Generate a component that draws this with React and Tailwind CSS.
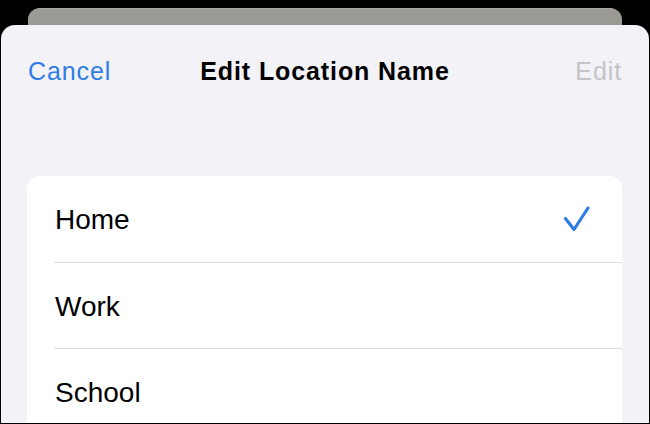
// App.jsx
const rows = [
  { label: 'Home', checked: true, h: 'h-[86px]' },
  { label: 'Work', checked: false, h: 'h-[85px]' },
  { label: 'School', checked: false, h: 'h-[86px]' },
]

const Check = () => (
  <svg width="28" height="28" viewBox="0 0 28 28" fill="none" className="mr-[31px]">
    <path
      d="M2.5 13.5 L11 24.5 L25 3"
      stroke="#2f7de4"
      strokeWidth="3.2"
      strokeLinecap="round"
      strokeLinejoin="round"
    />
  </svg>
)

const App = () => {
  return (
    <div
      className="w-[650px] h-[424px] bg-black flex flex-col overflow-hidden"
      style={{ fontFamily: '"Liberation Sans", Arial, sans-serif' }}
    >
      {/* Card stacked behind */}
      <div className="mt-[8px] mx-[28px] h-[17px] shrink-0 rounded-t-[12px] bg-[#9b9a94] border-t border-[#a9a8a2]" />

      {/* Sheet */}
      <div className="flex-1 mx-[1px] mb-[1px] bg-[#f2f2f7] rounded-t-[14px] overflow-hidden flex flex-col">
        {/* Nav bar */}
        <div className="h-[92px] shrink-0 grid grid-cols-[1fr_auto_1fr] items-center pl-[27px] pr-[27px]">
          <span className="text-[25px] leading-none tracking-[0.9px] text-[#2f7de4] justify-self-start">
            Cancel
          </span>
          <span className="text-[25px] leading-none tracking-[0.9px] font-bold text-black">
            Edit Location Name
          </span>
          <span className="text-[25px] leading-none tracking-[0.9px] text-[#c4c4c9] justify-self-end">
            Edit
          </span>
        </div>

        {/* List */}
        <div className="mt-[59px] ml-[26px] mr-[27px] flex-1 bg-white rounded-t-[12px]">
          {rows.map((row, i) => (
            <div key={row.label}>
              <div className={`${row.h} flex items-center justify-between pl-[28px]`}>
                <span className="text-[28px] leading-none text-black pt-[2px]">{row.label}</span>
                {row.checked && <Check />}
              </div>
              {i < rows.length - 1 && <div className="ml-[27px] h-px bg-[#dcdce1]" />}
            </div>
          ))}
        </div>
      </div>
    </div>
  )
}

export default App
